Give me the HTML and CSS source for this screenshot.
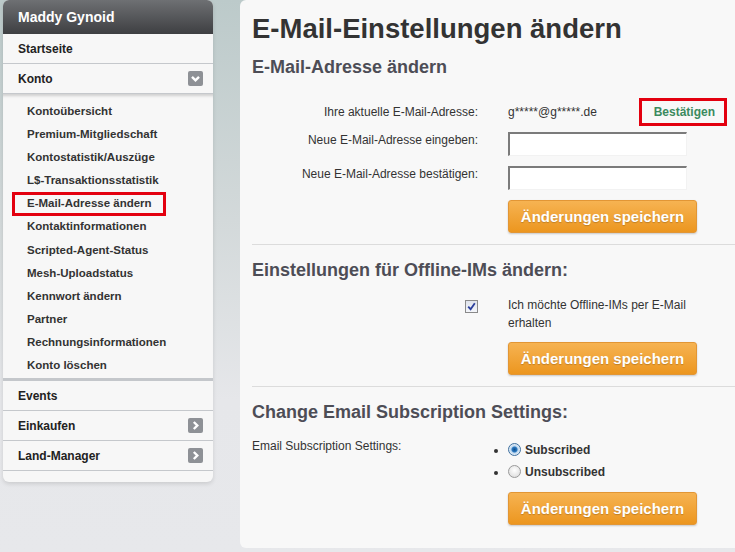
FILE: index.html
```html
<!DOCTYPE html>
<html>
<head>
    <meta charset="utf-8" />
    <title>E-Mail-Einstellungen ändern</title>
    <link rel="stylesheet" href="styles.css">
</head>
<body>
    <div class="page">
        <aside class="sidebar">
            <div class="user">Maddy Gynoid</div>
            <ul class="nav">
                <li class="nav-item">Startseite</li>
                <li class="nav-item">Konto
                    <svg class="toggle" width="15" height="15" viewBox="0 0 15 15"><rect width="15" height="15" rx="2" fill="#8e9196"/><path d="M4 5.8 L7.5 9.3 L11 5.8" fill="none" stroke="#fff" stroke-width="2.4"/></svg>
                </li>
                <li class="sub">
                    <ul>
                        <li>Kontoübersicht</li>
                        <li>Premium-Mitgliedschaft</li>
                        <li>Kontostatistik/Auszüge</li>
                        <li>L$-Transaktionsstatistik</li>
                        <li><span class="marked">E-Mail-Adresse ändern</span></li>
                        <li>Kontaktinformationen</li>
                        <li>Scripted-Agent-Status</li>
                        <li>Mesh-Uploadstatus</li>
                        <li>Kennwort ändern</li>
                        <li>Partner</li>
                        <li>Rechnungsinformationen</li>
                        <li>Konto löschen</li>
                    </ul>
                </li>
                <li class="nav-item">Events</li>
                <li class="nav-item">Einkaufen
                    <svg class="toggle" width="15" height="15" viewBox="0 0 15 15"><rect width="15" height="15" rx="2" fill="#8e9196"/><path d="M5.8 4 L9.3 7.5 L5.8 11" fill="none" stroke="#fff" stroke-width="2.4"/></svg>
                </li>
                <li class="nav-item">Land-Manager
                    <svg class="toggle" width="15" height="15" viewBox="0 0 15 15"><rect width="15" height="15" rx="2" fill="#8e9196"/><path d="M5.8 4 L9.3 7.5 L5.8 11" fill="none" stroke="#fff" stroke-width="2.4"/></svg>
                </li>
            </ul>
        </aside>

        <main class="content">
            <h1>E-Mail-Einstellungen ändern</h1>

            <h2 class="first">E-Mail-Adresse ändern</h2>
            <div class="row row-current">
                <div class="label">Ihre aktuelle E-Mail-Adresse:</div>
                <div class="value current">
                    <span>g*****@g*****.de</span>
                    <span class="confirm">Bestätigen</span>
                </div>
            </div>
            <div class="row row-input">
                <div class="label">Neue E-Mail-Adresse eingeben:</div>
                <div class="value"><input class="field" type="text"></div>
            </div>
            <div class="row row-input">
                <div class="label">Neue E-Mail-Adresse bestätigen:</div>
                <div class="value"><input class="field" type="text"></div>
            </div>
            <div class="row">
                <div class="label"></div>
                <div class="value"><button class="save">Änderungen speichern</button></div>
            </div>

            <hr>

            <h2>Einstellungen für Offline-IMs ändern:</h2>
            <div class="row row-check">
                <div class="label">
                    <span class="checkbox">
                        <svg width="9" height="9" viewBox="0 0 9 9"><path d="M1.2 4.6 L3.6 7.2 L7.8 1.2" fill="none" stroke="#2b3f9c" stroke-width="1.8"/></svg>
                    </span>
                </div>
                <div class="value check-text">Ich möchte Offline-IMs per E-Mail erhalten</div>
            </div>
            <div class="row">
                <div class="label"></div>
                <div class="value"><button class="save">Änderungen speichern</button></div>
            </div>

            <hr>

            <h2>Change Email Subscription Settings:</h2>
            <div class="row row-radio">
                <div class="label left">Email Subscription Settings:</div>
                <div class="value">
                    <ul class="radios">
                        <li><span class="radio on"></span>Subscribed</li>
                        <li><span class="radio"></span>Unsubscribed</li>
                    </ul>
                </div>
            </div>
            <div class="row">
                <div class="label"></div>
                <div class="value"><button class="save">Änderungen speichern</button></div>
            </div>
        </main>
    </div>
</body>
</html>
```

FILE: styles.css
```css
html, body {
  margin: 0;
  padding: 0;
}

body {
  font-family: "Liberation Sans", Arial, sans-serif;
  font-size: 12px;
  color: #333;
  background: linear-gradient(to bottom, #bccaca 0, #d3d9da 220px, #e6e7ea 400px, #e7e8eb 552px);
  min-height: 552px;
}

.page {
  display: flex;
  align-items: flex-start;
}

/* sidebar */

.sidebar {
  width: 210px;
  margin-left: 3px;
  background: #f7f7f7;
  border-radius: 6px;
  box-shadow: 0 2px 4px rgba(0, 0, 0, 0.12);
  padding-bottom: 11px;
}

.user {
  height: 34px;
  line-height: 34px;
  padding-left: 15px;
  color: #fff;
  font-size: 14px;
  font-weight: bold;
  border-radius: 6px 6px 0 0;
  background: linear-gradient(to bottom, #6e7073, #3e3f42);
}

.nav,
.nav ul {
  list-style: none;
  margin: 0;
  padding: 0;
}

.nav-item {
  display: flex;
  align-items: center;
  justify-content: space-between;
  height: 29px;
  padding: 0 10px 0 15px;
  border-bottom: 1px solid #c5c8cc;
  font-weight: bold;
  color: #222;
}

.sub {
  border-bottom: 3px solid #c4c7cb;
  box-shadow: inset 0 4px 3px -2px rgba(0, 0, 0, 0.16);
  padding: 6px 0 1px;
}

.sub li {
  height: 23.1px;
  line-height: 23px;
  padding-left: 24px;
  font-size: 11.5px;
  font-weight: bold;
  color: #333;
}

.marked {
  position: relative;
  display: inline-block;
}

.marked::after {
  content: "";
  position: absolute;
  left: -15px;
  right: -14px;
  top: 0;
  bottom: -1px;
  border: 3px solid #e3000f;
}

/* content */

.content {
  flex: 1;
  margin-left: 27px;
  background: #f8f8f8;
  border-radius: 6px 0 0 6px;
  padding: 14px 0 23px 12px;
  min-height: 511px;
}

h1 {
  margin: 0;
  font-size: 27.5px;
  line-height: 30px;
  color: #333;
}

h2 {
  margin: 0 0 15px;
  font-size: 18px;
  line-height: 21px;
  color: #4d4d56;
}

h2.first {
  margin: 13px 0 20px;
}

hr {
  border: 0;
  border-top: 1px solid #dcdcdc;
  margin: 11px 0 15px;
}

.row {
  display: grid;
  grid-template-columns: 226px auto;
  column-gap: 30px;
  align-items: start;
}

.label {
  text-align: right;
  line-height: 16px;
}

.label.left {
  text-align: left;
}

.row-current {
  height: 28px;
  align-items: center;
  margin-bottom: 6px;
}

.current {
  display: flex;
  align-items: center;
  justify-content: space-between;
  width: 219px;
}

.confirm {
  border: 3px solid #e3000f;
  height: 22px;
  line-height: 22px;
  padding: 0 9px 0 12px;
  color: #3b8a5e;
  font-weight: bold;
}

.row-input {
  margin-bottom: 10px;
}

.field {
  display: block;
  box-sizing: border-box;
  width: 179px;
  height: 24px;
  margin: 0;
  background: #fff;
  border: 0;
  border-top: 2px solid #7b7b7b;
  border-left: 2px solid #7b7b7b;
  border-right: 1px solid #f2f2f2;
  border-bottom: 1px solid #f2f2f2;
}

.save {
  display: block;
  width: 189px;
  height: 33px;
  padding: 0;
  border: 1px solid #e29635;
  border-radius: 3px;
  background: linear-gradient(to bottom, #f6b352, #ec961f);
  box-shadow: 0 1px 2px rgba(0, 0, 0, 0.2);
  color: #fff;
  font-family: "Liberation Sans", Arial, sans-serif;
  font-size: 15px;
  font-weight: bold;
  text-shadow: 0 1px 1px rgba(0, 0, 0, 0.2);
}

.row-check {
  margin-bottom: 10px;
}

.row-check .label {
  padding-top: 4px;
}

.checkbox {
  display: inline-flex;
  align-items: center;
  justify-content: center;
  box-sizing: border-box;
  width: 13px;
  height: 13px;
  border: 1px solid #8a8a8a;
  background: linear-gradient(to bottom, #dfe3ec, #f4f6fa);
  vertical-align: top;
}

.check-text {
  width: 190px;
  line-height: 18px;
}

.row-radio {
  margin-bottom: 9px;
}

.radios {
  margin: 1px 0 0;
  padding: 0;
  list-style: disc;
  font-weight: bold;
}

.radios li {
  line-height: 22px;
}

.radio {
  display: inline-block;
  box-sizing: border-box;
  width: 13px;
  height: 13px;
  margin-right: 4px;
  border: 1px solid #9a9a9a;
  border-radius: 50%;
  background: radial-gradient(circle at 50% 40%, #ffffff, #d8d8d8);
  vertical-align: -2px;
}

.radio.on {
  border-color: #3e6f9e;
  background: radial-gradient(circle at 50% 50%, #0f4f8f 0, #2a78c0 2.5px, #bcd6ee 3.5px, #eef4fa 6px);
}
```
